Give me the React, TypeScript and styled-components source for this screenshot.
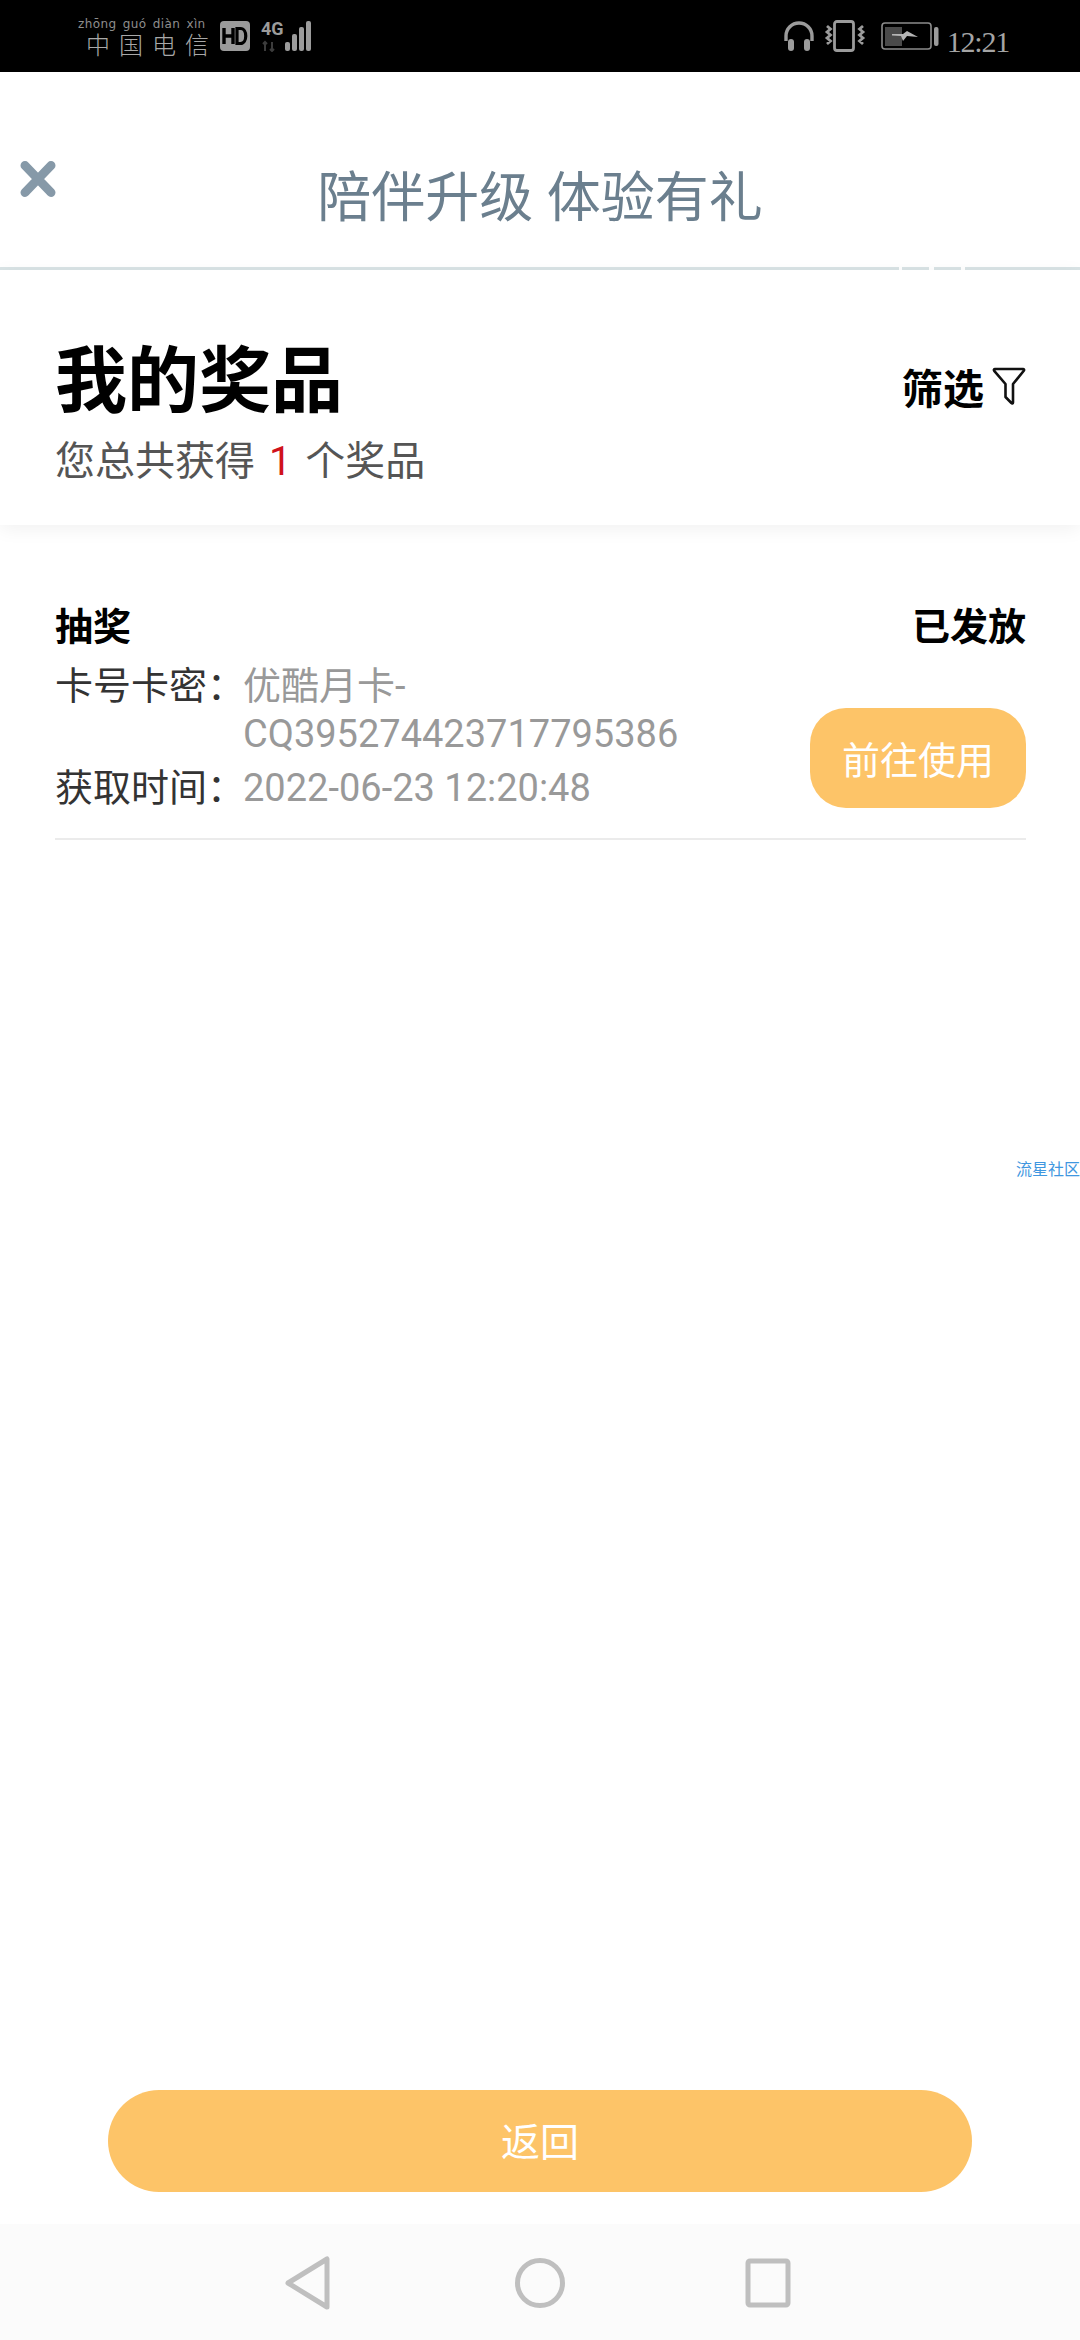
import React from "react";
import styled, { createGlobalStyle } from "styled-components";

const Global = createGlobalStyle`
html, body { margin: 0; padding: 0; background: #fff; }
* { box-sizing: border-box; }
`;

const SANS = `Roboto, "Noto Sans CJK SC", sans-serif`;

const Page = styled.div`
position: relative;
width: 1080px;
height: 2340px;
overflow: hidden;
display: flex;
flex-direction: column;
background: #fff;
font-family: ${SANS};
`;

const StatusBar = styled.div`
height: 72px;
flex: none;
background: #000;
color: #9a9a9a;
display: flex;
align-items: flex-start;
justify-content: space-between;
padding: 0 71px 0 78px;
`;

const StatusSide = styled.div`
display: flex;
align-items: flex-start;
`;

const Carrier = styled.div`
width: 142px;
display: flex;
flex-direction: column;
margin-top: 17px;
`;

const Pinyin = styled.div`
font-family: "DejaVu Sans", sans-serif;
font-size: 12px;
line-height: 14px;
letter-spacing: 0.4px;
word-spacing: 2px;
white-space: nowrap;
color: #8e8e8e;
`;

const CarrierName = styled.div`
font-family: "Noto Sans CJK SC", sans-serif;
font-weight: 300;
font-size: 24px;
line-height: 26px;
letter-spacing: 9px;
margin-left: 8px;
white-space: nowrap;
color: #a8a8a8;
`;

const StatusIcon = styled.svg<{ $top: number; $left: number }>`
display: block;
flex: none;
margin-top: ${(p) => p.$top}px;
margin-left: ${(p) => p.$left}px;
`;

const Clock = styled.div`
font-family: "Liberation Serif", serif;
font-size: 30px;
line-height: 30px;
margin: 27px 0 0 8px;
color: #a5a5a5;
letter-spacing: -1.2px;
`;

const Header = styled.header`
height: 195px;
flex: none;
display: grid;
grid-template-columns: 1fr auto 1fr;
`;

const CloseIcon = styled.svg`
margin: 88px 0 0 20px;
display: block;
`;

const Title = styled.h1`
margin: 97px 0 0;
font-size: 54px;
line-height: 60px;
font-weight: 400;
color: #6b7f8e;
white-space: pre;
`;

const HeaderLine = styled.div`
height: 3px;
flex: none;
background: linear-gradient(
  to right,
  #d9e3e5 899px,
  #fff 899px 902px,
  #d9e3e5 902px 929px,
  #fff 929px 934px,
  #d9e3e5 934px 961px,
  #fff 961px 965px,
  #d9e3e5 965px
);
`;

const Summary = styled.section`
height: 255px;
flex: none;
display: flex;
justify-content: space-between;
padding: 70px 54px 0 55px;
background: #fff;
box-shadow: 0 4px 18px rgba(0, 0, 0, 0.06);
`;

const SummaryText = styled.div`
display: flex;
flex-direction: column;
`;

const BigTitle = styled.h2`
margin: 0;
font-size: 72px;
line-height: 84px;
font-weight: 700;
color: #000;
`;

const Total = styled.div`
margin-top: 14px;
font-size: 40px;
line-height: 48px;
word-spacing: 4px;
color: #555;
`;

const Count = styled.span`
color: #d0121b;
`;

const Filter = styled.div`
display: flex;
align-items: center;
gap: 8px;
height: 50px;
margin-top: 21px;
font-size: 41px;
font-weight: 700;
color: #000;
`;

const PrizeList = styled.main`
flex: 1;
padding: 0 54px 0 55px;
`;

const Prize = styled.article`
padding: 77px 0 26px;
border-bottom: 2px solid #ebebeb;
`;

const PrizeTop = styled.div`
display: flex;
justify-content: space-between;
font-size: 38px;
line-height: 50px;
font-weight: 700;
color: #000;
`;

const PrizeBody = styled.div`
display: flex;
justify-content: space-between;
align-items: flex-end;
margin-top: 10px;
`;

const Details = styled.dl`
margin: 0;
display: grid;
grid-template-columns: 188px 445px;
row-gap: 6px;
font-size: 38px;
line-height: 48px;
`;

const Label = styled.dt`
color: #333;
white-space: nowrap;
`;

const Value = styled.dd`
margin: 0;
color: #999;
`;

const UseButton = styled.button`
width: 216px;
height: 100px;
margin-bottom: 4px;
padding: 0 0 2px;
border: none;
border-radius: 36px;
background: #fdc468;
color: #fff;
font-family: ${SANS};
font-size: 38px;
`;

const Footer = styled.div`
flex: none;
display: flex;
justify-content: center;
padding-bottom: 32px;
`;

const BackButton = styled.button`
width: 864px;
height: 102px;
padding: 0 0 4px;
border: none;
border-radius: 51px;
background: #fdc468;
color: #fff;
font-family: ${SANS};
font-size: 39px;
`;

const NavBar = styled.nav`
height: 116px;
flex: none;
background: #fbfbfb;
display: flex;
align-items: flex-start;
padding: 32px 0 0 285px;
`;

const NavIcon = styled.svg<{ $left: number }>`
display: block;
margin-left: ${(p) => p.$left}px;
`;

const Watermark = styled.div`
position: absolute;
right: 0;
top: 1159px;
font-size: 16px;
line-height: 22px;
color: #3f97e0;
white-space: nowrap;
`;

const App = () => {
  return (
    <Page>
      <Global />
      <StatusBar>
        <StatusSide>
          <Carrier>
            <Pinyin>zhōng guó diàn xìn</Pinyin>
            <CarrierName>中国电信</CarrierName>
          </Carrier>
          <StatusIcon $top={21} $left={0} width="30" height="30" viewBox="0 0 30 30">
            <rect width="30" height="30" rx="4" fill="#9b9b9b" />
            <path d="M4 7v16M13 7v16M4 15h9" stroke="#000" strokeWidth="3.4" fill="none" />
            <path d="M17 7.5h3.5c7 0 7 15 0 15H17z" stroke="#000" strokeWidth="3.2" fill="none" />
          </StatusIcon>
          <StatusIcon $top={20} $left={11} width="52" height="32" viewBox="0 0 52 32">
            <text x="0" y="15" fontFamily="Roboto, sans-serif" fontWeight="700" fontSize="18" fill="#9b9b9b">4G</text>
            <path d="M4 31V22M2 24l2-2 2 2M11 22v9M9 29l2 2 2-2" stroke="#3c3c3c" strokeWidth="2" fill="none" />
            <rect x="24" y="22" width="5" height="9" rx="2" fill="#9b9b9b" />
            <rect x="31" y="14" width="5" height="17" rx="2" fill="#9b9b9b" />
            <rect x="38" y="7" width="5" height="24" rx="2" fill="#9b9b9b" />
            <rect x="45" y="1" width="5" height="30" rx="2" fill="#9b9b9b" />
          </StatusIcon>
        </StatusSide>
        <StatusSide>
          <StatusIcon $top={20} $left={0} width="32" height="32" viewBox="0 0 32 32">
            <path d="M3 21V16a13 13 0 0 1 26 0v5" stroke="#9b9b9b" strokeWidth="3.4" fill="none" />
            <rect x="5" y="19" width="6" height="12" rx="3" fill="#9b9b9b" />
            <rect x="21" y="19" width="6" height="12" rx="3" fill="#9b9b9b" />
          </StatusIcon>
          <StatusIcon $top={20} $left={9} width="42" height="32" viewBox="0 0 42 32">
            <rect x="10.5" y="1.5" width="19" height="29" rx="2.5" stroke="#9b9b9b" strokeWidth="2.8" fill="none" />
            <path d="M3 6l3.5 3-3.5 3 3.5 3-3.5 3 3.5 3-3.5 3M39 6l-3.5 3 3.5 3-3.5 3 3.5 3-3.5 3 3.5 3" stroke="#9b9b9b" strokeWidth="2.8" fill="none" />
          </StatusIcon>
          <StatusIcon $top={22} $left={15} width="58" height="29" viewBox="0 0 58 29">
            <rect x="1" y="1" width="49" height="26" rx="3" stroke="#8c8c8c" strokeWidth="1.6" fill="none" />
            <rect x="4" y="5" width="17" height="19" fill="#4a4a4a" />
            <path d="M11 12h11l4-3 11 6-11-1-4 5-2-5-9-.5z" fill="#b5b5b5" />
            <rect x="53" y="5" width="4.5" height="19" rx="2" fill="#9b9b9b" />
          </StatusIcon>
          <Clock>12:21</Clock>
        </StatusSide>
      </StatusBar>

      <Header>
        <CloseIcon width="36" height="38" viewBox="0 0 36 38">
          <path d="M5 5.5l26 27M31 5.5l-26 27" stroke="#8699a8" strokeWidth="9" strokeLinecap="round" />
        </CloseIcon>
        <Title>陪伴升级 体验有礼</Title>
      </Header>
      <HeaderLine />

      <Summary>
        <SummaryText>
          <BigTitle>我的奖品</BigTitle>
          <Total>
            您总共获得 <Count>1</Count> 个奖品
          </Total>
        </SummaryText>
        <Filter>
          筛选
          <svg width="34" height="40" viewBox="0 0 34 40">
            <path
              d="M3 3h28c1 0 1.4 1 .8 1.8L21 18v18.5c0 1-1 1.2-1.6.5L13.5 31V18L2.2 4.8C1.6 4 2 3 3 3z"
              stroke="#111"
              strokeWidth="2.6"
              fill="none"
              strokeLinejoin="round"
            />
          </svg>
        </Filter>
      </Summary>

      <PrizeList>
        <Prize>
          <PrizeTop>
            <span>抽奖</span>
            <span>已发放</span>
          </PrizeTop>
          <PrizeBody>
            <Details>
              <Label>卡号卡密：</Label>
              <Value>优酷月卡-CQ395274423717795386</Value>
              <Label>获取时间：</Label>
              <Value>2022-06-23 12:20:48</Value>
            </Details>
            <UseButton>前往使用</UseButton>
          </PrizeBody>
        </Prize>
      </PrizeList>

      <Footer>
        <BackButton>返回</BackButton>
      </Footer>

      <NavBar>
        <NavIcon $left={0} width="46" height="54" viewBox="0 0 46 54">
          <path d="M42 3v48L3 27z" stroke="#bfbfbf" strokeWidth="5" strokeLinejoin="round" fill="none" />
        </NavIcon>
        <NavIcon $left={184} width="50" height="54" viewBox="0 0 50 54">
          <ellipse cx="25" cy="27" rx="22.5" ry="22.5" stroke="#bfbfbf" strokeWidth="5" fill="none" />
        </NavIcon>
        <NavIcon $left={180} width="46" height="54" viewBox="0 0 46 54">
          <rect x="3" y="5" width="40" height="44" rx="2" stroke="#bfbfbf" strokeWidth="5" fill="none" />
        </NavIcon>
      </NavBar>

      <Watermark>流星社区</Watermark>
    </Page>
  );
};

export default App;
